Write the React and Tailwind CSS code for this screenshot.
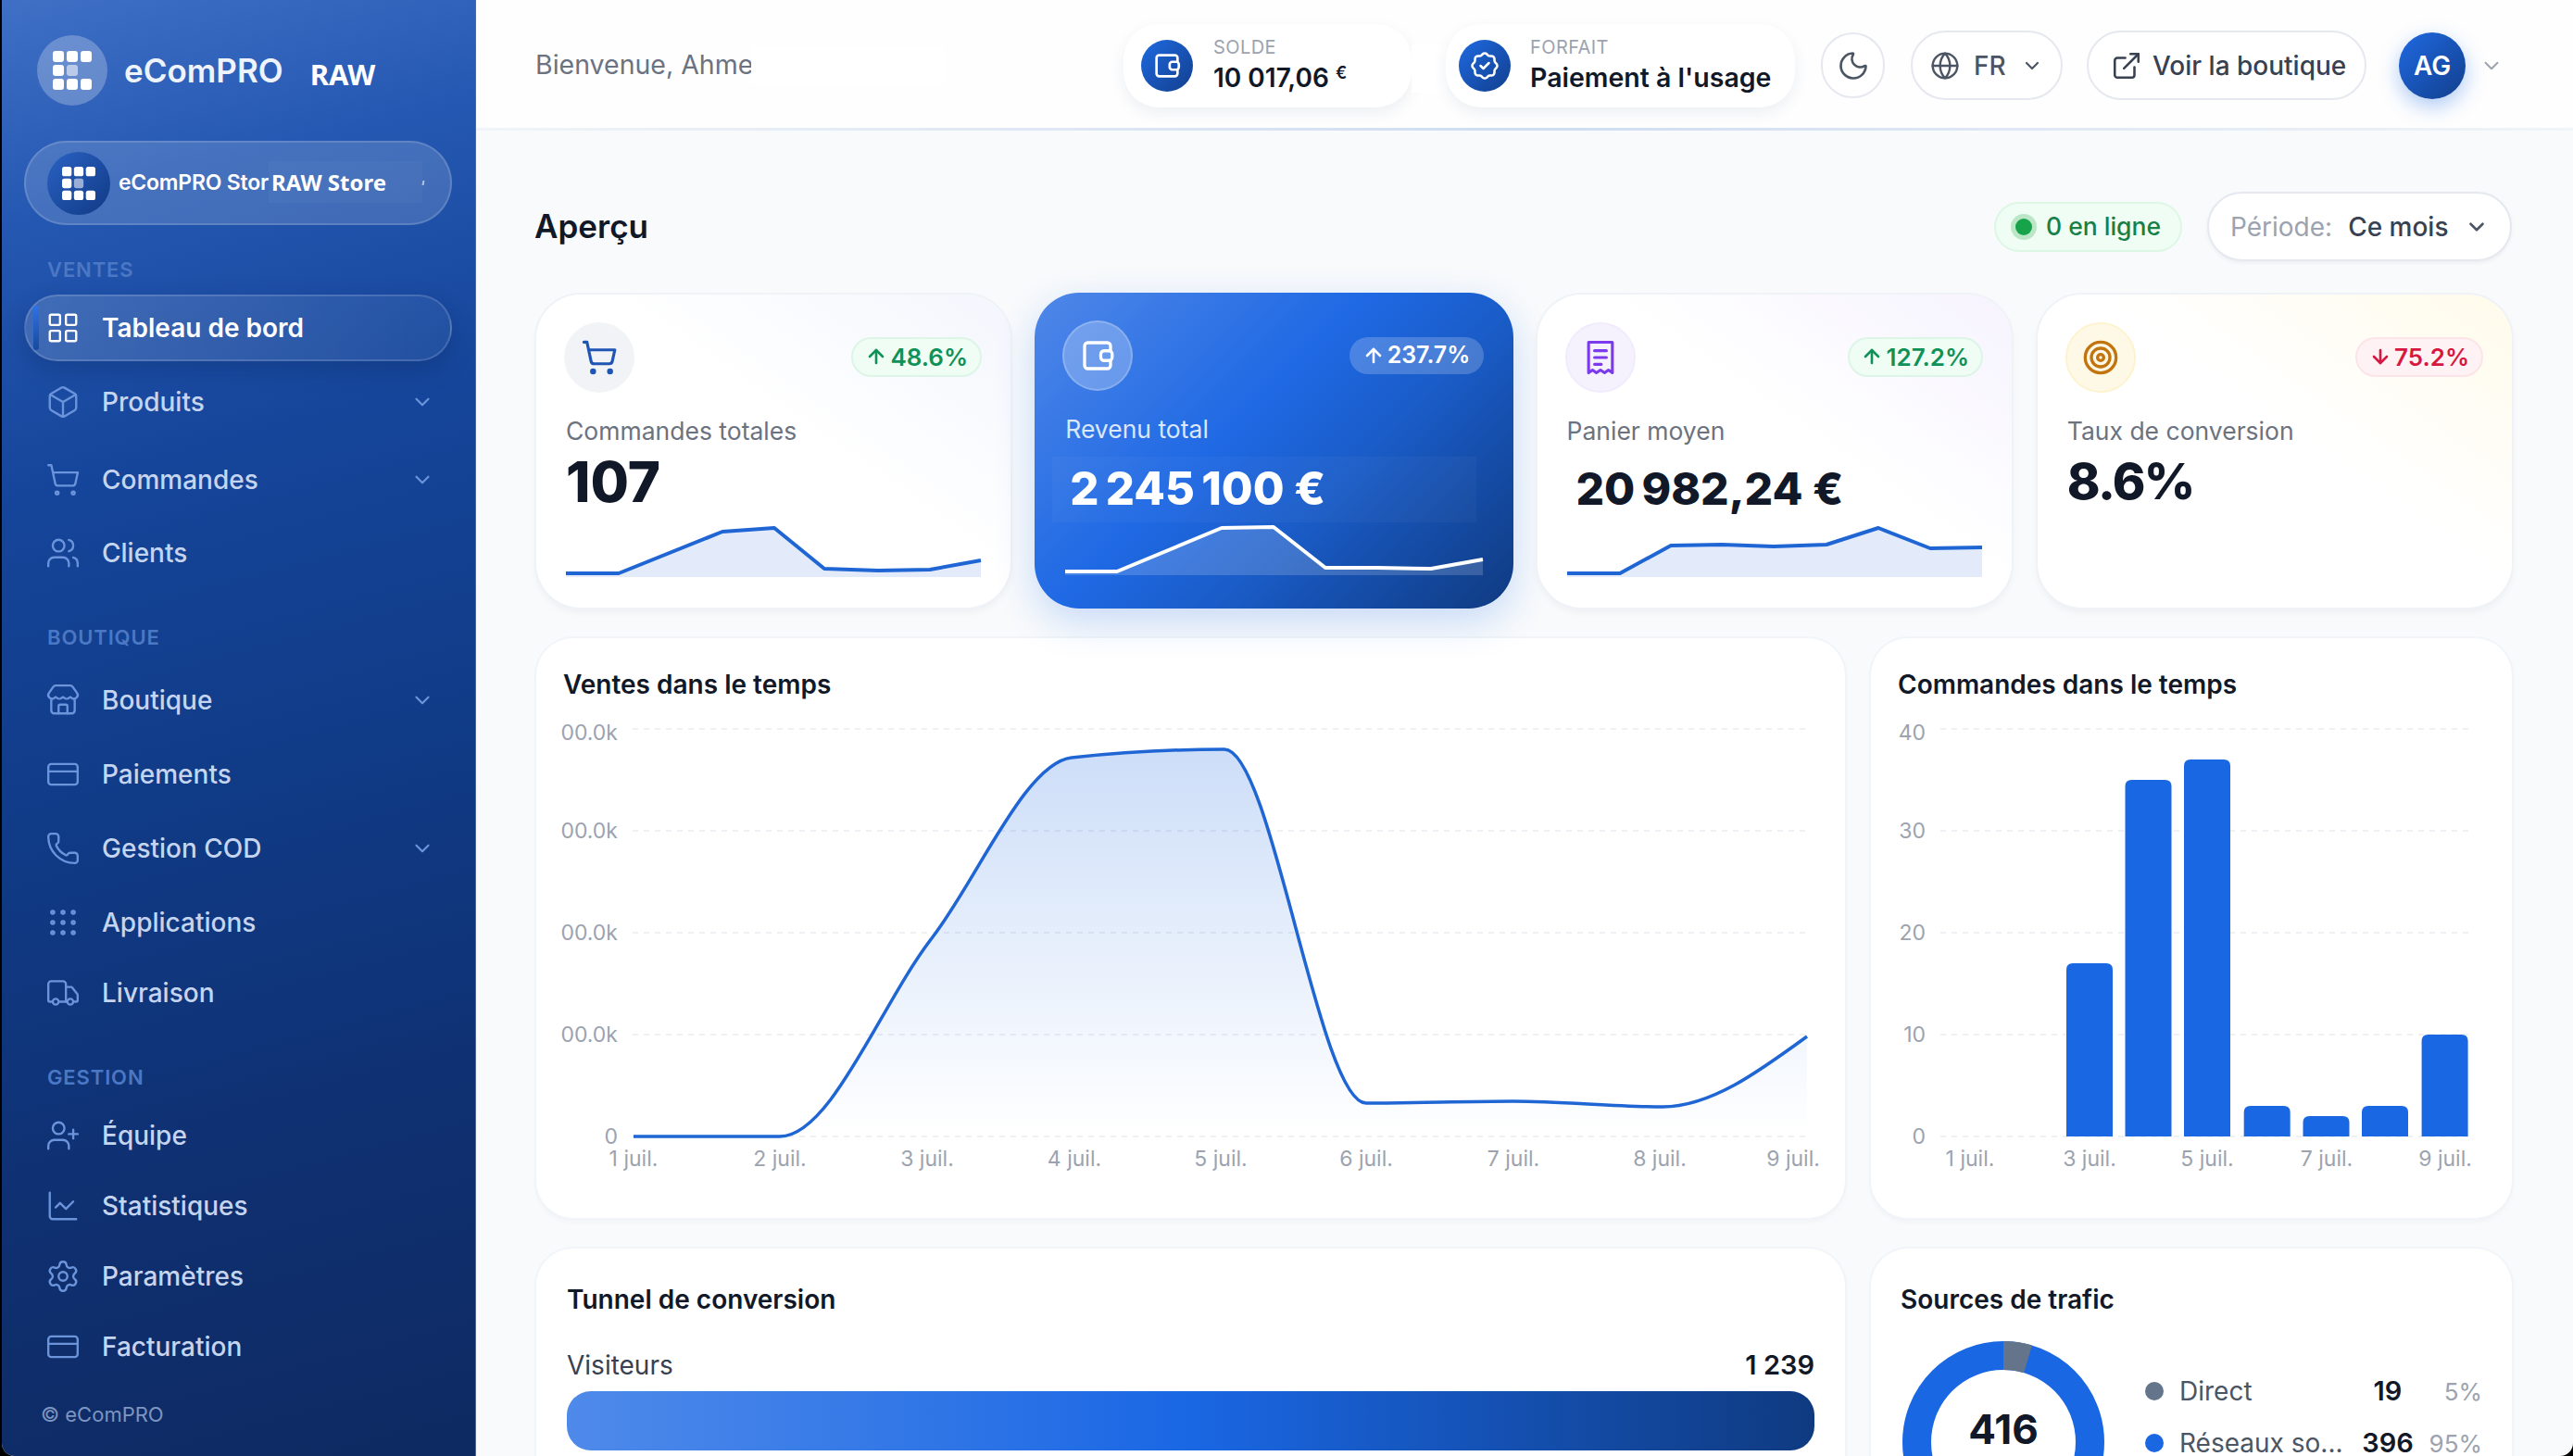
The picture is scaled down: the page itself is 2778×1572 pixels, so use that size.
import {
  ArrowDown, ArrowUp, Box, ChartLine, ChevronDown, CreditCard, ExternalLink, Globe, Grip,
  LayoutGrid, Moon, Phone, Settings, ShoppingCart, Store, Target, Truck, UserPlus, Users,
} from 'lucide-react';
import { TbRosetteDiscountCheck } from 'react-icons/tb';

const sections = [
  { label: 'VENTES', cls: 'mt-[33px]', rows: [
    { name: 'Tableau de bord', icon: LayoutGrid, active: true, cls: 'mt-[12px]' },
    { name: 'Produits', icon: Box, arrow: true, cls: 'mt-[6px]' },
    { name: 'Commandes', icon: ShoppingCart, arrow: true, cls: 'mt-[8px]' },
    { name: 'Clients', icon: Users, cls: 'mt-[3px]' },
  ] },
  { label: 'BOUTIQUE', cls: 'mt-[38px]', rows: [
    { name: 'Boutique', icon: Store, arrow: true, cls: 'mt-[15px]' },
    { name: 'Paiements', icon: CreditCard, cls: 'mt-[4px]' },
    { name: 'Gestion COD', icon: Phone, arrow: true, cls: 'mt-[4px]' },
    { name: 'Applications', icon: Grip, cls: 'mt-[4px]' },
    { name: 'Livraison', icon: Truck, cls: 'mt-0' },
  ] },
  { label: 'GESTION', cls: 'mt-[38px]', rows: [
    { name: 'Équipe', icon: UserPlus, cls: 'mt-[10px]' },
    { name: 'Statistiques', icon: ChartLine, cls: 'mt-0' },
    { name: 'Paramètres', icon: Settings, cls: 'mt-0' },
    { name: 'Facturation', icon: CreditCard, cls: 'mt-0' },
  ] },
];

const salesLine = 'M0,440 L158,440 C213,440 267,297 322,226 C372,161 423,36.5 473,31 C528,25 583,22 638,22 C689,22 740,404 791,404 C844,404 897,402 950,402 C1004,402 1057,408 1111,408 C1163,408 1215,370 1267,332';
const bars = [
  { x: 211, v: 17 }, { x: 274.5, v: 35 }, { x: 338, v: 37 }, { x: 402.7, v: 3 },
  { x: 466.5, v: 2 }, { x: 530, v: 3 }, { x: 594.6, v: 10 },
];

function LogoMark({ size }) {
  return (
    <svg width={size} height={size} viewBox="0 0 42 42" fill="#fff">
      {[0, 15, 30].map((y) => [0, 15, 30].map((x) => {
        if (y === 15 && x === 30) return null;
        return <rect key={`${x}-${y}`} x={x} y={y} width="12" height="12" rx="3" fillOpacity={y === 15 && x === 15 ? 0.55 : 1} />;
      }))}
    </svg>
  );
}

function WalletIcon({ size, color }) {
  return (
    <svg width={size} height={size} viewBox="0 0 24 24" fill="none" stroke={color} strokeWidth="1.9" strokeLinejoin="round" strokeLinecap="round">
      <path d="M20 9V6a2 2 0 0 0-2-2H6a2 2 0 0 0-2 2v12a2 2 0 0 0 2 2h12a2 2 0 0 0 2-2v-3" />
      <rect x="14" y="9" width="7" height="6" rx="2" />
    </svg>
  );
}

function ReceiptIcon({ size, color }) {
  return (
    <svg width={size} height={size} viewBox="0 0 24 24" fill="none" stroke={color} strokeWidth="1.7" strokeLinejoin="round" strokeLinecap="round">
      <path d="M5 3h14v18l-2.3-1.6-2.3 1.6-2.4-1.6-2.4 1.6-2.3-1.6L5 21z" />
      <path d="M8.5 8h7M8.5 12h7M8.5 16h4" />
    </svg>
  );
}

function Spark({ w, h, pts, stroke, fill }) {
  const line = pts.map((p) => p.join(',')).join(' ');
  const area = `0,${h} ${line} ${w},${h}`;
  return (
    <svg width={w} height={h} viewBox={`0 0 ${w} ${h}`} className="block overflow-visible">
      <polygon points={area} fill={fill} />
      <polyline points={line} fill="none" stroke={stroke} strokeWidth="4" strokeLinejoin="round" />
    </svg>
  );
}

function Trend({ value, down, cls }) {
  const Arrow = down ? ArrowDown : ArrowUp;
  return (
    <div className={`flex h-[43px] items-center justify-center gap-[3px] rounded-full border-2 text-[26px] font-semibold ${cls}`}>
      <Arrow size={24} strokeWidth={2.6} />
      {value}
    </div>
  );
}

function NavRow({ row }) {
  const Icon = row.icon;
  return (
    <div className={`relative ml-[24px] mr-[25px] flex items-center ${row.active
      ? 'h-[72px] rounded-full border-2 border-white/15 bg-gradient-to-r from-white/15 to-white/5 pl-[21px] text-white shadow-[0_10px_24px_rgba(8,30,80,0.25)]'
      : 'h-[76px] pl-[23px] text-[#c5d5f0]'} ${row.cls}`}>
      {row.active && <span className="absolute left-[8px] top-[10px] h-[48px] w-[6px] rounded-full bg-gradient-to-b from-[#2f72e6] to-[#174a9f]" />}
      <Icon size={38} strokeWidth={1.5} className={row.active ? 'text-white' : 'text-[#6b94da]'} />
      <span className={`ml-[23px] text-[28px] ${row.active ? 'font-semibold' : 'font-medium'}`}>{row.name}</span>
      {row.arrow && <ChevronDown size={26} strokeWidth={2} className="ml-auto mr-[19px] text-[#6b94da]" />}
    </div>
  );
}

function Sidebar() {
  return (
    <aside className="flex h-[1572px] w-[512px] shrink-0 flex-col border-r border-[#3a6ec4] bg-[linear-gradient(165deg,#3f70c6_0%,#2558b2_14%,#15459a_32%,#103a85_55%,#0f2f6f_80%,#0e2a62_100%)]">
      <div className="flex h-[152px] items-center pl-[38px]">
        <div className="flex h-[76px] w-[76px] items-center justify-center rounded-full bg-white/25">
          <LogoMark size={42} />
        </div>
        <span className="ml-[18px] text-[35px] font-semibold text-[#eef3fc]">eComPRO</span>
        <span className="ml-[29px] mt-[8px] font-['Noto_Sans'] text-[31px] font-bold text-white">RAW</span>
      </div>
      <div className="relative ml-[24px] mr-[25px] flex h-[91px] items-center rounded-full border-2 border-white/15 bg-white/15 pl-[23px]">
        <div className="flex h-[68px] w-[68px] items-center justify-center rounded-full bg-gradient-to-br from-[#2a62c4] to-[#103a85]">
          <LogoMark size={36} />
        </div>
        <span className="ml-[9px] whitespace-nowrap text-[23px] font-semibold tracking-[-0.01em] text-white">eComPRO Stor</span>
        <span className="absolute left-[262px] top-[20px] flex h-[45px] w-[166px] items-center bg-white/[0.03] pl-[3px] font-['Noto_Sans'] text-[24px] font-bold text-white">RAW Store</span>
        <span className="absolute left-[428px] top-[41px] h-[5px] w-[2px] rotate-12 bg-white/60" />
      </div>
      {sections.map((s) => (
        <div key={s.label}>
          <div className={`flex h-[30px] items-center pl-[49px] text-[22px] font-semibold tracking-[0.04em] text-[#4b78c4] ${s.cls}`}>{s.label}</div>
          {s.rows.map((row) => <NavRow key={row.name} row={row} />)}
        </div>
      ))}
      <div className="mt-[20px] flex h-[30px] items-center pl-[42px] text-[22px] text-[#7d95c0]">© eComPRO</div>
    </aside>
  );
}

function Header() {
  return (
    <header className="relative flex h-[141px] shrink-0 items-center bg-white/80 pl-[64px] pr-[75px]">
      <span className="text-[28.5px] text-[#6b7280]">Bienvenue, Ahme</span>
      <span className="ml-[-2px] h-[41px] w-[208px] bg-white" />

      <div className="relative ml-auto flex h-[90px] w-[311px] items-center rounded-[38px] bg-white pl-[19px] shadow-[0_6px_16px_rgba(30,60,120,0.08)]">
        <div className="flex h-[56px] w-[56px] items-center justify-center rounded-full bg-gradient-to-br from-[#1f6ae2] to-[#123f8e]">
          <WalletIcon size={34} color="#fff" />
        </div>
        <div className="ml-[22px]">
          <div className="h-[26px] text-[20px] leading-[26px] tracking-[0.02em] text-[#9ca3af]">SOLDE</div>
          <div className="h-[40px] whitespace-nowrap text-[28px] font-semibold leading-[40px] text-[#111827]">10 017,06 <sup className="text-[18px]">€</sup></div>
        </div>
        <span className="absolute left-full top-[23px] h-[51px] w-[38px] bg-white" />
      </div>

      <div className="relative ml-[37px] flex h-[90px] w-[377px] items-center rounded-[38px] bg-white pl-[14px] shadow-[0_6px_16px_rgba(30,60,120,0.08)]">
        <div className="flex h-[56px] w-[56px] items-center justify-center rounded-full bg-gradient-to-br from-[#1f6ae2] to-[#123f8e]">
          <TbRosetteDiscountCheck size={36} color="#fff" strokeWidth={1.7} />
        </div>
        <div className="ml-[21px]">
          <div className="h-[26px] text-[20px] leading-[26px] tracking-[0.02em] text-[#9ca3af]">FORFAIT</div>
          <div className="h-[40px] whitespace-nowrap text-[28.5px] font-semibold leading-[40px] text-[#111827]">Paiement à l'usage</div>
        </div>
      </div>

      <div className="ml-[28px] flex h-[71px] w-[69px] items-center justify-center rounded-full border-2 border-[#e5e8ee] bg-white">
        <Moon size={36} strokeWidth={1.8} className="text-[#4b5563]" />
      </div>
      <div className="ml-[28px] flex h-[75px] w-[164px] items-center rounded-full border-2 border-[#e5e8ee] bg-white pl-[19px] text-[#4b5563]">
        <Globe size={32} strokeWidth={1.8} />
        <span className="ml-[15px] text-[28px] font-medium">FR</span>
        <ChevronDown size={24} strokeWidth={2.2} className="ml-[16px]" />
      </div>
      <div className="ml-[26px] flex h-[75px] w-[302px] items-center rounded-full border-2 border-[#e5e8ee] bg-white pl-[24px] text-[#374151]">
        <ExternalLink size={34} strokeWidth={1.8} />
        <span className="ml-[11px] whitespace-nowrap text-[28px] font-medium">Voir la boutique</span>
      </div>
      <div className="ml-[35px] flex h-[72px] w-[72px] items-center justify-center rounded-full bg-gradient-to-br from-[#1f6ae2] to-[#123f8e] text-[28px] font-semibold text-white shadow-[0_8px_22px_rgba(26,103,228,0.35)]">AG</div>
      <ChevronDown size={26} strokeWidth={1.8} className="ml-[15px] text-[#9ca3af]" />

      <span className="absolute bottom-0 left-0 h-[3px] w-full bg-gradient-to-r from-[#f1f4f8] via-[#cfdcf1] to-[#f1f4f8]" />
    </header>
  );
}

function StatCard({ card, children }) {
  return (
    <div className="relative h-[338px] rounded-[48px] bg-[linear-gradient(215deg,var(--tint)_0%,#ffffff_45%)] p-[30px] shadow-[0_0_0_2px_#eff2f7,0_5px_8px_rgba(15,23,42,0.05)]" style={{ '--tint': card.tint }}>
      <div className="flex items-start justify-between">
        <div className={`flex h-[76px] w-[76px] items-center justify-center rounded-full border-2 ${card.iconBox}`}>{card.icon}</div>
        <div className="mr-px mt-[16px]">{card.trend}</div>
      </div>
      <div className="ml-[2px] mt-[23px] h-[36px] text-[26.5px] leading-[36px] text-[#6b7280]">{card.label}</div>
      {children}
    </div>
  );
}

function KpiRow() {
  return (
    <div className="mt-[34px] grid h-[340px] grid-cols-4 items-center gap-[28px]">
      <StatCard card={{
        tint: '#f3f6fd', iconBox: 'border-[#f3f4f6] bg-[#f1f3f6]', label: 'Commandes totales',
        icon: <ShoppingCart size={40} strokeWidth={1.9} className="text-[#1f56b4]" />,
        trend: <Trend value="48.6%" cls="w-[141px] border-[#dcf5e6] bg-[#f0fdf4] text-[#0f9158]" />,
      }}>
        <div className="ml-[2px] mt-[5px] h-[64px] text-[60px] font-extrabold leading-[64px] text-[#111827]">107</div>
        <div className="ml-[2px] mt-[17px]">
          <Spark w={448} h={54} stroke="#1f66d4" fill="#e3ebfa" pts={[[0, 50], [57, 50], [169, 5], [225, 1], [279, 45], [337, 47], [393, 46], [448, 36]]} />
        </div>
      </StatCard>

      <div className="relative -mx-[2px] h-[341px] rounded-[48px] bg-[linear-gradient(135deg,#4f87e8_0%,#1f69e4_42%,#1a5cc8_62%,#0f3a80_100%)] p-[30px] shadow-[0_14px_40px_rgba(26,103,228,0.22)]">
        <span className="absolute left-[19px] top-[177px] h-[71px] w-[458px] bg-white/[0.03]" />
        <div className="relative flex items-start justify-between">
          <div className="flex h-[76px] w-[76px] items-center justify-center rounded-full border-2 border-white/20 bg-white/25">
            <WalletIcon size={42} color="#fff" />
          </div>
          <div className="mr-[2px] mt-[18px] flex h-[40px] w-[145px] items-center justify-center gap-[3px] rounded-full bg-white/20 text-[25px] font-semibold text-white">
            <ArrowUp size={24} strokeWidth={2.6} />237.7%
          </div>
        </div>
        <div className="relative ml-[3px] mt-[23px] h-[36px] text-[26.5px] leading-[36px] text-[#dbe7fb]">Revenu total</div>
        <div className="relative ml-[8px] mt-[15px] h-[64px] whitespace-nowrap text-[49px] font-extrabold leading-[64px] tracking-[-0.05em] text-white">2{'\u202f'}245{'\u202f'}100{'\u00a0'}€</div>
        <div className="relative ml-[3px] mt-[8px]">
          <Spark w={451} h={53} stroke="#fff" fill="rgba(255,255,255,0.17)" pts={[[0, 49], [56, 49], [169, 2], [225, 1], [281, 45], [337, 45], [395, 46], [451, 36]]} />
        </div>
      </div>

      <StatCard card={{
        tint: '#f6f3fe', iconBox: 'border-[#f1ecfd] bg-[#f5f2fe]', label: 'Panier moyen',
        icon: <ReceiptIcon size={44} color="#7c3aed" />,
        trend: <Trend value="127.2%" cls="w-[146px] border-[#dcf5e6] bg-[#f0fdf4] text-[#0f9158]" />,
      }}>
        <div className="ml-[12px] mt-[13px] h-[64px] whitespace-nowrap text-[48px] font-extrabold leading-[64px] tracking-[-0.05em] text-[#111827]">20{'\u202f'}982,24{'\u00a0'}€</div>
        <div className="ml-[2px] mt-[9px]">
          <Spark w={448} h={54} stroke="#1f66d4" fill="#e3ebfa" pts={[[0, 50], [57, 50], [112, 20], [167, 19], [223, 21], [280, 19], [336, 1], [392, 23], [448, 22]]} />
        </div>
      </StatCard>

      <StatCard card={{
        tint: '#fffbeb', iconBox: 'border-[#fdf3cf] bg-[#fef9e7]', label: 'Taux de conversion',
        icon: <Target size={40} strokeWidth={2} className="text-[#c2740f]" />,
        trend: <Trend value="75.2%" down cls="w-[138px] border-[#fde4e8] bg-[#fef2f4] text-[#d6173f]" />,
      }}>
        <div className="ml-[2px] mt-[5px] h-[64px] text-[54px] font-extrabold leading-[64px] tracking-[-0.03em] text-[#111827]">8.6%</div>
      </StatCard>
    </div>
  );
}

function SalesChart() {
  const ys = [16, 126, 236, 346, 456];
  const days = [[104, '1 juil.'], [262, '2 juil.'], [421, '3 juil.'], [580, '4 juil.'], [738, '5 juil.'], [895, '6 juil.'], [1054, '7 juil.'], [1212, '8 juil.'], [1356, '9 juil.']];
  return (
    <svg width="1412" height="530" viewBox="0 0 1412 530" className="mt-[14px] block">
      <defs>
        <linearGradient id="salesFill" x1="0" y1="0" x2="0" y2="1">
          <stop offset="0" stopColor="#1a67e0" stopOpacity="0.22" />
          <stop offset="1" stopColor="#1a67e0" stopOpacity="0" />
        </linearGradient>
      </defs>
      {ys.map((y, i) => (
        <g key={y}>
          <line x1="104" x2="1371" y1={y} y2={y} stroke="#eef0f3" strokeWidth="2" strokeDasharray="6 6" />
          <text x="88" y={y + (i === 0 ? 12 : 8)} textAnchor="end" fontSize="23" fill="#9ca3af">{i === 4 ? '0' : '00.0k'}</text>
        </g>
      ))}
      <g transform="translate(105 16)">
        <path d={`${salesLine} L1267,440 L0,440 Z`} fill="url(#salesFill)" />
        <path d={salesLine} fill="none" stroke="#1f66d4" strokeWidth="3.5" />
      </g>
      {days.map(([x, t]) => <text key={t} x={x + 1} y="488" textAnchor="middle" fontSize="23" fill="#9ca3af">{t}</text>)}
    </svg>
  );
}

function OrdersChart() {
  const ticks = [[16, '40'], [126, '30'], [236, '20'], [346, '10'], [456, '0']];
  const days = [[107, '1 juil.'], [236, '3 juil.'], [363, '5 juil.'], [492, '7 juil.'], [620, '9 juil.']];
  return (
    <svg width="692" height="530" viewBox="0 0 692 530" className="mt-[14px] block">
      {ticks.map(([y, t], i) => (
        <g key={t}>
          <line x1="75" x2="646" y1={y} y2={y} stroke="#eef0f3" strokeWidth="2" strokeDasharray="6 6" />
          <text x="59" y={y + (i === 0 ? 12 : 8)} textAnchor="end" fontSize="23" fill="#9ca3af">{t}</text>
        </g>
      ))}
      {bars.map((b) => {
        const top = 456 - b.v * 11;
        return <path key={b.x} d={`M${b.x},456 V${top + 7} q0,-7 7,-7 H${b.x + 43} q7,0 7,7 V456 Z`} fill="#1a67e4" />;
      })}
      {days.map(([x, t]) => <text key={t} x={x} y="488" textAnchor="middle" fontSize="23" fill="#9ca3af">{t}</text>)}
    </svg>
  );
}

function Legend({ color, name, count, pct }) {
  return (
    <div className="flex h-[56px] items-center">
      <span className={`h-[20px] w-[20px] rounded-full ${color}`} />
      <span className="ml-[17px] w-[190px] whitespace-nowrap text-[28px] text-[#4b5563]">{name}</span>
      <span className="w-[70px] text-center text-[29px] font-semibold text-[#111827]">{count}</span>
      <span className="flex-1 text-right text-[26px] text-[#9ca3af]">{pct}</span>
    </div>
  );
}

const panel = 'rounded-[40px] bg-white shadow-[0_0_0_2px_#f1f4f8,0_4px_6px_rgba(15,23,42,0.04)]';

export default function App() {
  return (
    <div className="h-[1572px] w-[2778px] overflow-hidden bg-black pl-[2px] font-[Inter]">
      <div className="flex h-full overflow-hidden rounded-b-[14px] bg-[#f8fafc]">
        <Sidebar />
        <main className="flex h-full min-w-0 flex-1 flex-col overflow-hidden">
          <Header />
          <div className="pl-[65px] pr-[66px]">
            <div className="mt-[66px] flex h-[75px] items-center">
              <h1 className="-ml-[2px] text-[35px] font-semibold text-[#111827]">Aperçu</h1>
              <div className="ml-auto flex h-[54px] w-[203px] items-center rounded-full border-2 border-[#dcf7e4] bg-[#f0fdf4] pl-[21px] text-[26.5px] font-medium text-[#14804a]">
                <span className="h-[18px] w-[18px] rounded-full bg-[#16a34a] shadow-[0_0_0_5px_#bbe7c8]" />
                <span className="ml-[15px] whitespace-nowrap">0 en ligne</span>
              </div>
              <div className="ml-[27px] flex h-[75px] w-[329px] items-center rounded-full border-2 border-[#e5e8ee] bg-white pl-[23px] text-[28px] shadow-[0_2px_4px_rgba(15,23,42,0.05)]">
                <span className="text-[#9ca3af]">Période:</span>
                <span className="ml-[17px] font-medium text-[#374151]">Ce mois</span>
                <ChevronDown size={26} strokeWidth={2.4} className="ml-[17px] text-[#4b5563]" />
              </div>
            </div>

            <KpiRow />

            <div className="mt-[33px] flex h-[626px] gap-[28px]">
              <section className={`w-[1413px] ${panel}`}>
                <h2 className="ml-[29px] mt-[32px] h-[36px] text-[28px] font-semibold leading-[36px] text-[#111827]">Ventes dans le temps</h2>
                <SalesChart />
              </section>
              <section className={`w-[692px] ${panel}`}>
                <h2 className="ml-[29px] mt-[32px] h-[36px] text-[28px] font-semibold leading-[36px] text-[#111827]">Commandes dans le temps</h2>
                <OrdersChart />
              </section>
            </div>

            <div className="mt-[33px] flex h-[500px] gap-[28px]">
              <section className={`w-[1413px] px-[33px] pt-[37px] ${panel}`}>
                <h2 className="h-[36px] text-[28px] font-semibold leading-[36px] text-[#111827]">Tunnel de conversion</h2>
                <div className="mt-[35px] flex h-[36px] items-center justify-between text-[28px]">
                  <span className="text-[#374151]">Visiteurs</span>
                  <span className="text-[29px] font-semibold text-[#111827]">1 239</span>
                </div>
                <div className="mt-[10px] h-[64px] rounded-[26px] bg-[linear-gradient(90deg,#4f8aea_0%,#1a67e4_50%,#0f3a80_100%)]" />
              </section>
              <section className={`w-[692px] pl-[32px] pt-[37px] ${panel}`}>
                <h2 className="h-[36px] text-[28px] font-semibold leading-[36px] text-[#111827]">Sources de trafic</h2>
                <div className="ml-[2px] mt-[27px] flex">
                  <div className="relative h-[218px] w-[218px] shrink-0">
                    <svg width="218" height="218" viewBox="0 0 218 218">
                      <circle cx="109" cy="109" r="93.5" fill="none" stroke="#1a67e4" strokeWidth="31" />
                      <circle cx="109" cy="109" r="93.5" fill="none" stroke="#64748b" strokeWidth="31" strokeDasharray="27 561" transform="rotate(-90 109 109)" />
                    </svg>
                    <span className="absolute left-0 top-[70px] w-full text-center text-[44px] font-bold leading-[50px] text-[#111827]">416</span>
                  </div>
                  <div className="ml-[44px] mt-[26px] w-[364px]">
                    <Legend color="bg-[#64748b]" name="Direct" count="19" pct="5%" />
                    <Legend color="bg-[#1a67e4]" name="Réseaux so..." count="396" pct="95%" />
                  </div>
                </div>
              </section>
            </div>
          </div>
        </main>
      </div>
    </div>
  );
}
